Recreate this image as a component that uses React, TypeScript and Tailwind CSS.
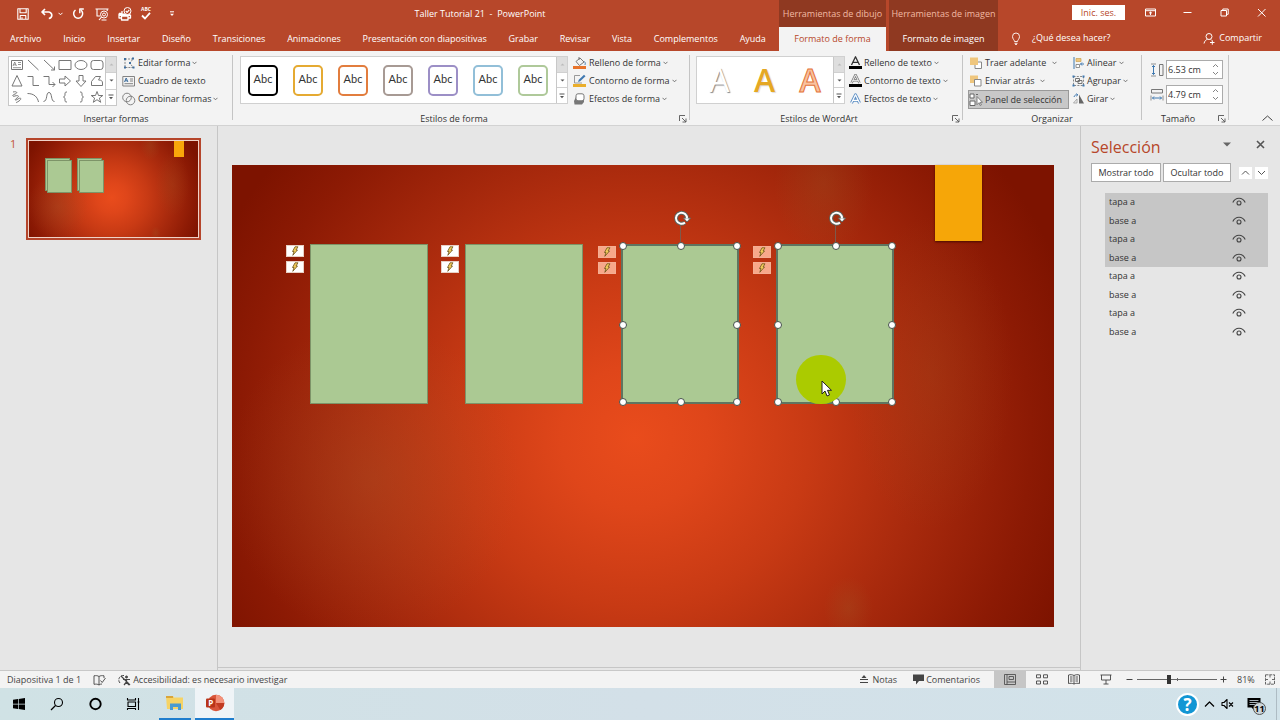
import type { ReactNode } from "react";
import { clsx } from "clsx";

type IconProps = {
  w?: number;
  h?: number;
  className?: string;
  children: ReactNode;
};

function Icon({ w = 14, h = 14, className, children }: IconProps) {
  return (
    <svg
      width={w}
      height={h}
      viewBox={`0 0 ${w} ${h}`}
      fill="none"
      stroke="currentColor"
      strokeLinejoin="round"
      className={clsx("shrink-0", className)}
      aria-hidden="true"
    >
      {children}
    </svg>
  );
}

function Caret({ className }: { className?: string }) {
  return (
    <Icon w={5} h={4} className={clsx("text-[#666]", className)}>
      <path d="M.5 .8 2.5 2.8 4.5 .8" strokeWidth=".9" />
    </Icon>
  );
}

/* ---------- title bar and tabs ---------- */

const tabs = [
  "Archivo",
  "Inicio",
  "Insertar",
  "Diseño",
  "Transiciones",
  "Animaciones",
  "Presentación con diapositivas",
  "Grabar",
  "Revisar",
  "Vista",
  "Complementos",
  "Ayuda",
];

function QuickAccess() {
  return (
    <div className="flex items-center text-white">
      <button aria-label="Guardar" className="ml-4">
        <Icon>
          <path d="M1.8 1.8h10.4v10.4H1.8zM4 1.8v4h6.2v-4M4.2 12.2V8.5h5.6v3.7M6 12v-1.8" strokeWidth="1.1" />
        </Icon>
      </button>
      <button aria-label="Deshacer" className="ml-[10px]">
        <Icon>
          <path d="M5 2 2 5l3 3M2.300 5h6a3 3 0 0 1 .5 6.500" strokeWidth="1.700" />
        </Icon>
      </button>
      <button aria-label="Más opciones de deshacer" className="ml-1">
        <Icon w={5} h={4}>
          <path d="M.5 .8 2.5 2.8 4.5 .8" />
        </Icon>
      </button>
      <button aria-label="Repetir" className="ml-2">
        <Icon>
          <path d="M9.800 3A4.500 4.500 0 1 1 4.500 3" strokeWidth="1.500" />
          <path d="M8.800 6.300V2h4" strokeWidth="1.400" />
        </Icon>
      </button>
      <button aria-label="Presentación desde el principio" className="ml-[10px]">
        <Icon>
          <path d="M.5 2h13M2 2v7h3M4 13l2.500-3M12.200 2v2M6.500 13h5" strokeWidth="1.100" />
          <circle cx="9" cy="7.500" r="3.500" />
          <circle cx="9" cy="7.500" r="1.500" />
        </Icon>
      </button>
      <button aria-label="Vista previa e impresión" className="ml-[9px]">
        <Icon>
          <path d="M1 6.500h3V4M1 6.500V11h2M3.500 9H10v4H3.500zM10 11h2.500V8" strokeWidth="1.300" />
          <path d="M1 6.500h11.500V9H1z" fill="currentColor" stroke="none" />
          <circle cx="9.500" cy="4" r="3.500" fill="#b7472a" />
          <path d="m7.800 4 1.300 1.300L11.300 2.800" strokeWidth="1.200" />
        </Icon>
      </button>
      <button aria-label="Ortografía" className="ml-[9px] flex flex-col items-center">
        <span className="text-[5px] leading-[5px] font-bold">ABC</span>
        <Icon w={10} h={8}>
          <path d="m1 3.500 3 3L9 .8" strokeWidth="1.800" />
        </Icon>
      </button>
      <button aria-label="Personalizar barra" className="ml-[18px]">
        <Icon w={6} h={6}>
          <path d="M1 .8h4" />
          <path d="M1 2.800h4L3 5z" fill="currentColor" stroke="none" />
        </Icon>
      </button>
    </div>
  );
}

function TitleBar() {
  return (
    <header className="flex h-[51px] bg-[#b7472a] text-white">
      <div className="flex w-[779px] grow flex-col">
        <div className="grid h-[27px] grid-cols-[1fr_auto_1fr] items-center">
          <QuickAccess />
          <h1 className="pl-[181px] whitespace-pre">Taller Tutorial 21  -  PowerPoint</h1>
          <span />
        </div>
        <nav className="flex h-6 items-center justify-between pr-[13px] pl-[10px]">
          {tabs.map((tab) => (
            <button key={tab} className="whitespace-nowrap">
              {tab}
            </button>
          ))}
        </nav>
      </div>

      <div className="flex w-[107px] flex-col bg-[#8f3921]">
        <div className="flex h-[27px] items-center justify-center whitespace-nowrap text-[#f2b9a4]">
          Herramientas de dibujo
        </div>
        <button className="flex h-6 items-center justify-center bg-[#f3f3f3] text-[#b7472a]">
          Formato de forma
        </button>
      </div>
      <div className="ml-[3px] flex w-[109px] flex-col bg-[#8f3921]">
        <div className="flex h-[27px] items-center justify-center whitespace-nowrap text-[#f2b9a4]">
          Herramientas de imagen
        </div>
        <button className="h-6 whitespace-nowrap">Formato de imagen</button>
      </div>

      <div className="flex w-[282px] grow flex-col">
        <div className="flex h-[25px] items-center justify-end pr-[13px]">
          <button className="mr-5 h-[15px] w-[53px] bg-white leading-[14px] text-[#b7472a]">
            Inic. ses.
          </button>
          <div className="flex gap-[26px]">
            <button aria-label="Opciones de presentación de la cinta">
              <Icon w={11} h={11}>
                <path d="M.5 2h10v7H.5zM.5 3.700h10M5.500 8V5M4 6.300 5.500 5 7 6.300" />
              </Icon>
            </button>
            <button aria-label="Minimizar">
              <Icon w={11} h={11}>
                <path d="M1.500 5.500h8" />
              </Icon>
            </button>
            <button aria-label="Restaurar">
              <Icon w={11} h={11}>
                <path d="M2 3.500h5.500V9H2zM3.800 3.500V2h5.400v5.300H7.500" />
              </Icon>
            </button>
            <button aria-label="Cerrar">
              <Icon w={11} h={11}>
                <path d="m2 2 7.500 7.500M9.500 2 2 9.500" />
              </Icon>
            </button>
          </div>
        </div>
        <div className="flex h-[26px] items-center justify-between pr-[18px] pl-3">
          <button className="flex items-center gap-[10px]">
            <Icon w={12} h={13}>
              <path d="M4.500 9.500C4.500 8 2.500 7 2.500 4.500a3.500 3.500 0 0 1 7 0C9.500 7 7.500 8 7.500 9.500zM4.500 11.300h3M5 12.600h2" strokeWidth=".9" />
            </Icon>
            ¿Qué desea hacer?
          </button>
          <button className="flex items-center gap-1">
            <Icon w={12} h={13}>
              <circle cx="6" cy="4.500" r="3" />
              <path d="M1 11.500C1.500 9 3 7.700 4.500 7.300M7.500 7.300l1 .7M7 10.500h4.500M9.300 8.300v4.400" />
            </Icon>
            Compartir
          </button>
        </div>
      </div>
    </header>
  );
}

/* ---------- ribbon ---------- */

function Group({ width, label, launcher, children }: {
  width: string;
  label: string;
  launcher?: boolean;
  children: ReactNode;
}) {
  return (
    <section className={clsx("flex shrink-0 flex-col pt-[3px]", width)}>
      <div className="flex h-[55px]">{children}</div>
      <div className="mt-1 flex items-center">
        <h2 className="flex-1 text-center">{label}</h2>
        {launcher && (
          <button aria-label={`Más opciones de ${label}`} className="w-[14px]">
            <Icon w={8} h={8} className="ml-1 text-[#555]">
              <path d="M.5 6V.5H6M3 3l4 4M7 3.500V7H3.500" strokeWidth=".9" />
            </Icon>
          </button>
        )}
      </div>
    </section>
  );
}

function Divider() {
  return <div className="mt-1 mb-[5px] w-px shrink-0 bg-[#c4c4c4]" />;
}

function GalleryScroll() {
  return (
    <div className="flex w-[11px] flex-col border-l border-[#c8c8c8] text-[#555]">
      <button aria-label="Fila anterior" className="flex flex-1 items-center justify-center bg-[#dedede]">
        <Icon w={5} h={3}>
          <path d="M.5 2.500h4L2.500 .5z" fill="#bbb" stroke="none" />
        </Icon>
      </button>
      <button aria-label="Fila siguiente" className="flex flex-1 items-center justify-center border-y border-[#d0d0d0]">
        <Icon w={5} h={3}>
          <path d="M.5 .5h4l-2 2z" fill="currentColor" stroke="none" />
        </Icon>
      </button>
      <button aria-label="Ver todo" className="flex flex-1 items-center justify-center">
        <Icon w={6} h={6}>
          <path d="M.5 1h5" />
          <path d="M1 3h4L3 5.200z" fill="currentColor" stroke="none" />
        </Icon>
      </button>
    </div>
  );
}

function Command({ icon, label, caret = true, wide }: {
  icon: ReactNode;
  label: string;
  caret?: boolean;
  wide?: boolean;
}) {
  return (
    <button className="flex h-[18px] items-center gap-[2px] whitespace-nowrap">
      {icon}
      {label}
      {caret && <Caret className={wide ? "ml-1" : ""} />}
    </button>
  );
}

const shapes: { name: string; art: ReactNode }[] = [
  { name: "Cuadro de texto", art: <><path d="M2.500 3.500h11v9h-11z" /><path d="m4 9 1.700-4L7.400 9M4.600 7.800h2.200M9 5.500h3M9 7.500h3M4 10.700h8" strokeWidth=".8" /></> },
  { name: "Línea", art: <path d="M3 3l10.500 10" /> },
  { name: "Flecha", art: <path d="M3 3l10.500 10M13.500 9.500V13H10" /> },
  { name: "Rectángulo", art: <path d="M2 3.500h12v9H2z" /> },
  { name: "Elipse", art: <ellipse cx="8" cy="8" rx="6" ry="4.500" /> },
  { name: "Rectángulo redondeado", art: <rect x="2" y="3.500" width="12" height="9" rx="2.500" /> },
  { name: "Triángulo", art: <path d="M8 2.500 13 13H3z" /> },
  { name: "Conector", art: <path d="M2.500 3.500H8v9h6" /> },
  { name: "Conector de flecha", art: <path d="M2.500 3.500H8v8h6M11.500 9l2.500 2.500-2.500 2.500" /> },
  { name: "Flecha derecha", art: <path d="M2.500 6h5.500V3l5.500 5L8 13v-3H2.500z" /> },
  { name: "Flecha abajo", art: <path d="M6 2.500h4V8h3l-5 5.500L3 8h3z" /> },
  { name: "Forma libre", art: <path d="M2.500 12.500v-4l4-5h5L9.500 7c3 0 4 1 4 3v2.500z" /> },
  { name: "Garabato", art: <path d="M4 3c4-1 5 1 2 2s-3 3 0 2 5 0 2 2-2 3 1 1 4 0 1 2-3 1-2 2" /> },
  { name: "Arco", art: <path d="M2.500 4.500C9 4.500 12.500 8 13.500 13" /> },
  { name: "Curva", art: <path d="M2.500 12.500C7 12 4.500 3.500 8 3.500s1.500 9 5.500 9" /> },
  { name: "Llave de apertura", art: <path d="M10 3c-2 0-2 .5-2 2s0 2.500-1.500 3C8 8.500 8 9.500 8 11s0 2 2 2" /> },
  { name: "Llave de cierre", art: <path d="M7 3c2 0 2 .5 2 2s0 2.500 1.500 3C9 8.500 9 9.500 9 11s0 2-2 2" /> },
  { name: "Estrella", art: <path d="m8 2.500 1.500 4h4.300l-3.400 2.600 1.300 4.200L8 10.700l-3.700 2.600 1.300-4.200L2.200 6.500h4.300z" /> },
];

const shapeStyles = [
  "border-black",
  "border-[#e5aa32]",
  "border-[#e27d3e]",
  "border-[#a79a94]",
  "border-[#9c8fc6]",
  "border-[#92bfd8]",
  "border-[#afc99a]",
];

const letterA = "M2.500 9 6.500 .8 10.500 9M4 6.300h5";

function Ribbon() {
  return (
    <div className="flex h-[75px] border-b border-[#d2d2d2] bg-[#f3f3f3] text-[#333]">
      <Group width="w-[232px]" label="Insertar formas">
        <div className="mt-[2px] ml-2 flex h-[50px] w-[109px] border border-[#c8c8c8] bg-white">
          <div className="grid flex-1 grid-cols-6 text-[#777]">
            {shapes.map((s) => (
              <button key={s.name} aria-label={s.name}>
                <Icon w={16} h={16}>{s.art}</Icon>
              </button>
            ))}
          </div>
          <GalleryScroll />
        </div>
        <div className="ml-[5px]">
          <Command
            label="Editar forma"
            icon={
              <Icon>
                <path d="M3 3h8L8 7l3 4.500H3z" stroke="#888" strokeDasharray="2 1" />
                <path d="M2 2h2v2H2zM10 1.500h2v2h-2zM2 10.500h2v2H2zM10.500 10.500h2v2h-2zM7 6h2v2H7z" fill="#3f6f9f" stroke="none" />
              </Icon>
            }
          />
          <Command
            label="Cuadro de texto"
            caret={false}
            icon={
              <Icon className="text-[#777]">
                <path d="M.8 2.500h11.700v9.500H.8zM8 5h3M8 7h3M2.500 9.700h8.500" strokeWidth=".9" />
                <path d="m2.500 8 1.700-4 1.700 4M3 6.800h2.300" stroke="#3f6f9f" />
              </Icon>
            }
          />
          <Command
            label="Combinar formas"
            icon={
              <Icon className="text-[#777]">
                <circle cx="5" cy="5.500" r="4.300" strokeWidth=".9" />
                <circle cx="8.500" cy="8.500" r="4.300" strokeWidth=".9" />
              </Icon>
            }
          />
        </div>
      </Group>
      <Divider />

      <Group width="w-[456px]" label="Estilos de forma" launcher>
        <div className="mt-[2px] ml-[7px] flex h-12 w-[328px] border border-[#d0d0d0] bg-white">
          <div className="flex flex-1 items-center gap-[15px] pl-[7px]">
            {shapeStyles.map((style) => (
              <button
                key={style}
                className={clsx(
                  "flex h-[31px] w-[30px] items-center justify-center rounded-[5px] border-2 bg-white pb-[3px] font-['Lato',sans-serif] text-[11px] text-[#333]",
                  style,
                )}
              >
                Abc
              </button>
            ))}
          </div>
          <GalleryScroll />
        </div>
        <div className="ml-[5px]">
          <Command
            label="Relleno de forma"
            icon={
              <Icon>
                <path d="M0 10h13v3H0z" fill="#e8742c" stroke="none" />
                <path d="m3 5.500 4-3.500 4 4-4.500 3.500zM6 4V1" stroke="#777" />
                <path d="M11.500 5.500c1 1.500 1 2.500.3 3.500" stroke="#3f78b0" />
              </Icon>
            }
          />
          <Command
            label="Contorno de forma"
            icon={
              <Icon>
                <path d="M0 10h13v3H0z" fill="#eaae2b" stroke="none" />
                <path d="M7 1.500H1.500V9H9" stroke="#999" />
                <path d="m5 8 .8-2.200L11 .8l1.500 1.500-5.300 5z" fill="#3f78b0" stroke="none" />
              </Icon>
            }
          />
          <Command
            label="Efectos de forma"
            icon={
              <Icon>
                <path d="M3 5h8v5l-2 2.500H1.500L1 9z" fill="#777" stroke="none" />
                <rect x="3" y="1.800" width="8" height="7" rx="2" fill="#fff" stroke="#777" />
              </Icon>
            }
          />
        </div>
      </Group>
      <Divider />

      <Group width="w-[272px]" label="Estilos de WordArt" launcher>
        <div className="mt-[2px] ml-[6px] flex h-12 w-[149px] border border-[#d0d0d0] bg-white">
          <div className="flex flex-1 items-center justify-around text-[32px] leading-none">
            <button className="text-white [text-shadow:1px_1px_1px_#888]">A</button>
            <button className="font-semibold text-[#e5a823] [text-shadow:1px_1px_1px_#ddd]">A</button>
            <button className="font-semibold text-[#f8c29f] [-webkit-text-stroke:1px_#e5743a]">A</button>
          </div>
          <GalleryScroll />
        </div>
        <div className="ml-1">
          <Command
            label="Relleno de texto"
            icon={
              <Icon w={13}>
                <path d={letterA} strokeWidth="1.300" />
                <path d="M0 10h13v3H0z" fill="#000" stroke="none" />
              </Icon>
            }
          />
          <Command
            label="Contorno de texto"
            icon={
              <Icon w={13}>
                <path d={letterA} stroke="#777" strokeWidth="2.400" />
                <path d={letterA} stroke="#fff" strokeWidth=".9" />
                <path d="M0 10h13v3H0z" fill="#000" stroke="none" />
              </Icon>
            }
          />
          <Command
            label="Efectos de texto"
            icon={
              <Icon w={13}>
                <g transform="translate(0 2)">
                  <path d={letterA} stroke="#5b8ec4" strokeWidth="3" />
                  <path d={letterA} stroke="#fff" strokeWidth="1.200" />
                </g>
              </Icon>
            }
          />
        </div>
      </Group>
      <Divider />

      <Group width="w-[178px]" label="Organizar">
        <div className="ml-[5px] w-[101px]">
          <div className="pl-px">
            <Command
              label="Traer adelante"
              wide
              icon={
                <Icon>
                  <path d="M6 6h6.500v6.500H6z" fill="#fff" stroke="#888" />
                  <path d="M1 1.500h8V9H1z" fill="#efc67d" stroke="none" />
                </Icon>
              }
            />
            <Command
              label="Enviar atrás"
              wide
              icon={
                <Icon>
                  <path d="M1 1.500h8V9H1z" fill="#efc67d" stroke="none" />
                  <path d="M5.500 5.500h6.500V12H5.500z" fill="#fff" stroke="#888" />
                </Icon>
              }
            />
          </div>
          <button aria-pressed="true" className="flex h-[19px] w-full items-center gap-[2px] border border-[#999] bg-[#c8c8c8] whitespace-nowrap">
            <Icon className="text-[#666]">
              <path d="M1 1h4v4H1zM1 8h5v4.500H1zM7 1.500h2" fill="#fff" />
              <path d="M8 3.500v8.200l2-2 1.200 2.800 1.200-.6-1.200-2.600h2.300z" fill="#fff" strokeWidth=".8" />
            </Icon>
            Panel de selección
          </button>
        </div>
        <div className="ml-[3px]">
          <Command
            label="Alinear"
            icon={
              <Icon w={13}>
                <path d="M2 1v12" stroke="#3f78b0" />
                <path d="M4 2.500h5v3H4z" fill="#efc67d" stroke="#caa050" strokeWidth=".7" />
                <path d="M4 8.500h3.500v3H4z" fill="#fff" stroke="#777" strokeWidth=".8" />
                <path d="M12 8H8.500M10 6.500 8.500 8 10 9.500" stroke="#3f78b0" />
              </Icon>
            }
          />
          <Command
            label="Agrupar"
            icon={
              <Icon w={13}>
                <path d="M1.500 2.500h10v9h-10z" stroke="#888" strokeDasharray="2 1.300" />
                <path d="M3.500 4.500h4v3h-4zM6 6.500h4v3H6z" stroke="#666" strokeWidth=".9" />
                <path d="M.5 1.500h2v2h-2zM10.500 1.500h2v2h-2zM.5 10.500h2v2h-2zM10.500 10.500h2v2h-2z" fill="#3f78b0" stroke="none" />
              </Icon>
            }
          />
          <Command
            label="Girar"
            icon={
              <Icon w={13}>
                <path d="M7 11.500V2.500l5 9z" fill="#666" stroke="none" />
                <path d="M5 11V7l-3.500 4z" stroke="#999" strokeWidth=".8" />
                <path d="M2 5c.5-2 2-2.500 3.500-2M4.500 1.500l1.300 1.400-1.500 1.300" stroke="#3f78b0" />
              </Icon>
            }
          />
        </div>
      </Group>
      <Divider />

      <Group width="w-[86px]" label="Tamaño" launcher>
        <div className="ml-[8px] flex flex-col gap-[6px] pt-[6px]">
          <SizeField label="Alto de forma" value="6.53 cm">
            <path d="M9.500 1.500h3.500v11H9.500z" stroke="#777" />
            <path d="M1 1h5M1 13h5" stroke="#777" strokeWidth=".8" />
            <path d="M3.500 2.500v9M2 4l1.500-1.500L5 4M2 10l1.500 1.500L5 10" stroke="#3f78b0" />
          </SizeField>
          <SizeField label="Ancho de forma" value="4.79 cm">
            <path d="M1.500 1.500h11V5h-11z" stroke="#777" />
            <path d="M1 7.500v5M13 7.500v5" stroke="#777" strokeWidth=".8" />
            <path d="M2.500 10h9M4 8.500 2.500 10 4 11.500M10 8.500l1.500 1.500-1.500 1.500" stroke="#3f78b0" />
          </SizeField>
        </div>
      </Group>
      <Divider />

      <button aria-label="Contraer la cinta de opciones" className="mt-auto mr-[6px] mb-[2px] ml-auto">
        <Icon w={13} h={10} className="text-[#444]">
          <path d="m1.500 7.500 5-4.500 5 4.500" />
        </Icon>
      </button>
    </div>
  );
}

function SizeField({ label, value, children }: { label: string; value: string; children: ReactNode }) {
  return (
    <label className="flex items-center gap-[2px]">
      <Icon>{children}</Icon>
      <span className="flex h-[19px] w-[57px] items-center border border-[#ababab] bg-white pr-[3px]">
        <input aria-label={label} defaultValue={value} className="w-full min-w-0 flex-1 pl-px outline-none" />
        <Icon w={7} h={13} className="text-[#777]">
          <path d="m1 4 2.500-2.500L6 4M1 9l2.500 2.500L6 9" strokeWidth=".9" />
        </Icon>
      </span>
    </label>
  );
}

/* ---------- slide ---------- */

const slideBackdrop =
  "bg-[radial-gradient(ellipse_18%_34%_at_17%_68%,#a8582a55,transparent),radial-gradient(ellipse_6%_16%_at_72%_4%,#a0602a40,transparent),radial-gradient(ellipse_3%_7%_at_75%_96%,#a0602a40,transparent),radial-gradient(ellipse_10%_34%_at_85%_45%,#a0501f40,transparent),radial-gradient(ellipse_56%_96%_at_49%_59%,#e94c1c_0%,#df461a_16%,#c83a14_38%,#a92a0d_62%,#8c1a04_86%,#7d1300_100%)]";

function Bolt({ faded }: { faded?: boolean }) {
  return (
    <div
      className={clsx(
        "flex h-3 w-[18px] items-center justify-center border",
        faded ? "border-[#f5ae93] bg-[#f7a88a]" : "border-[#e8d0c4] bg-white",
      )}
    >
      <Icon w={8} h={10}>
        <path d="M4 .8h3L5 4h1.500L1.800 9.300 3 5.500H1.500z" fill="#f2cc5a" stroke="#6a531a" strokeWidth=".8" />
      </Icon>
    </div>
  );
}

const handleSpots = [
  "-left-1 -top-1",
  "left-[54px] -top-1",
  "-right-1 -top-1",
  "-left-1 top-[75px]",
  "-right-1 top-[75px]",
  "-left-1 -bottom-1",
  "left-[54px] -bottom-1",
  "-right-1 -bottom-1",
];

function Card({ place, selected }: { place: string; selected?: boolean }) {
  return (
    <div
      className={clsx(
        "absolute top-[79px] h-[160px] w-[118px] bg-[#abc993]",
        selected ? "border-2 border-[#5f7560]" : "border border-[#7d9468]",
        place,
      )}
    >
      <div className="absolute top-0 -left-[25px] flex flex-col gap-1">
        <Bolt faded={selected} />
        <Bolt faded={selected} />
      </div>
      {selected && (
        <>
          <div className="absolute -top-5 left-[57px] h-4 w-px bg-[#7d5a4c]" />
          <Icon w={18} h={18} className="absolute -top-[36px] left-[50px]">
            <path d="M12 12.500A5.500 5.500 0 1 1 14 8.500" stroke="#5f6660" strokeWidth="4" />
            <path d="M10.500 8h7L14 12z" fill="#fff" stroke="#5f6660" />
            <path d="M12 12.500A5.500 5.500 0 1 1 14 8.500" stroke="#fff" strokeWidth="2" />
          </Icon>
          {handleSpots.map((spot) => (
            <span
              key={spot}
              className={clsx("absolute size-[8px] rounded-full border border-[#45504a] bg-white", spot)}
            />
          ))}
        </>
      )}
    </div>
  );
}

function Slide() {
  return (
    <div className={clsx("relative aspect-[822/462] w-full bg-[#7d1300]", slideBackdrop)}>
      <div className="absolute top-0 left-[703px] h-[76px] w-[47px] bg-[#f6a608] shadow-[0_1px_2px_#4a0c00]" />
      <Card place="left-[78px]" />
      <Card place="left-[233px]" />
      <Card place="left-[389px]" selected />
      <Card place="left-[544px]" selected />
      <div className="absolute top-[190px] left-[564px] h-[49px] w-[50px] rounded-full bg-[#abcb00]" />
      <Icon w={12} h={18} className="absolute top-[215px] left-[589px]">
        <path d="M1 1v13l3-3 2 5 2.500-1-2-4.700h4z" fill="#fff" stroke="#222" />
      </Icon>
    </div>
  );
}

function Thumbnails() {
  return (
    <aside className="flex w-[218px] shrink-0 items-start border-r border-[#c6c6c6] pt-3">
      <span className="w-[26px] pl-[10px] text-[11px] text-[#c2553b]">1</span>
      <button
        aria-label="Diapositiva 1"
        className="h-[102px] w-[175px] border-2 border-[#b5452b] bg-[#f0d3c8] p-px"
      >
        <div className={clsx("relative h-full w-full bg-[#7d1300]", slideBackdrop)}>
          <div className="absolute top-0 left-[145px] h-4 w-[10px] bg-[#f9a60a]" />
          {["left-[16px]", "left-[48px]"].map((left) => (
            <div key={left} className={clsx("absolute top-[17px]", left)}>
              <div className="h-[33px] w-[25px] border border-[#7d9468] bg-[#abc993]" />
              <div className="absolute top-[2px] left-[2px] h-[33px] w-[25px] border border-[#7d9468] bg-[#abc993]" />
            </div>
          ))}
        </div>
      </button>
    </aside>
  );
}

/* ---------- selection pane ---------- */

const items = ["tapa a", "base a", "tapa a", "base a", "tapa a", "base a", "tapa a", "base a"];

function SelectionPane() {
  return (
    <aside className="w-[200px] shrink-0 border-l border-[#c6c6c6] pl-[10px] text-[#333]">
      <div className="flex items-center pt-[10px] pr-[15px]">
        <h2 className="flex-1 text-[16px] leading-[22px] text-[#b7472a]">Selección</h2>
        <button aria-label="Opciones del panel" className="mr-[25px] mb-[5px]">
          <Icon w={8} h={5}>
            <path d="M0 .5h8l-4 4z" fill="#666" stroke="none" />
          </Icon>
        </button>
        <button aria-label="Cerrar panel" className="mb-[5px]">
          <Icon w={9} h={9} className="text-[#555]">
            <path d="m1 1 7 7M8 1 1 8" strokeWidth="1.600" />
          </Icon>
        </button>
      </div>
      <div className="mt-[5px] flex items-center">
        <button className="h-[19px] w-[70px] border border-[#ababab] bg-white">Mostrar todo</button>
        <button className="ml-[2px] h-[19px] w-[68px] border border-[#ababab] bg-white">Ocultar todo</button>
        <button aria-label="Traer adelante" className="ml-2 bg-white">
          <Icon w={13} h={12} className="text-[#555]">
            <path d="m3 7.500 3.500-3.500L10 7.500" />
          </Icon>
        </button>
        <button aria-label="Enviar atrás" className="ml-[3px] bg-white">
          <Icon w={13} h={12} className="text-[#555]">
            <path d="M3 4l3.500 3.500L10 4" />
          </Icon>
        </button>
      </div>
      <ul className="mt-[11px] mr-3 ml-[14px] grid h-[148px] auto-rows-fr">
        {items.map((name, i) => (
          <li key={i} className={clsx("flex items-center pr-[22px] pl-1", i < 4 && "bg-[#c6c6c6]")}>
            <span className="flex-1">{name}</span>
            <button aria-label={`Ocultar ${name}`}>
              <Icon w={14} h={12} className="text-[#444]">
                <path d="M.8 6.500C3.500 .8 10.500 .8 13.200 6.500" strokeWidth="1.100" />
                <circle cx="7" cy="7" r="2" strokeWidth="1.100" />
              </Icon>
            </button>
          </li>
        ))}
      </ul>
    </aside>
  );
}

/* ---------- status bar and taskbar ---------- */

function StatusBar() {
  return (
    <footer className="flex h-[18px] items-center border-t border-[#c8c8c8] bg-[#f3f3f3] pl-[7px] text-[#444]">
      <span>Diapositiva 1 de 1</span>
      <button aria-label="Revisión ortográfica" className="ml-3">
        <Icon w={13} h={12}>
          <path d="M6 11V2.500C4.500 1.500 3 1.500 1 1.800v8.500c2-.3 3.500-.3 5 .7 1-.8 2-1 3-1M6 2.500C7.500 1.500 9 1.500 11 1.800V4M7.500 6.500l1.700 2L12.500 4" strokeWidth=".9" />
        </Icon>
      </button>
      <button className="ml-3 flex items-center gap-[2px]">
        <Icon w={13} h={12}>
          <path d="M6 1.500A4.500 4.500 0 0 0 2 9" strokeDasharray="3 1" />
          <circle cx="8.500" cy="3" r="1" fill="currentColor" />
          <path d="M5 5.500h7M8.500 5v3L6 11M8.500 8l2.500 3M3 2l9 9" strokeWidth="1.200" />
        </Icon>
        Accesibilidad: es necesario investigar
      </button>
      <div className="ml-auto flex h-full items-center">
        <button className="flex items-center gap-[3px]">
          <Icon w={10} h={11}>
            <path d="M1 5.500h8M1 8.500h8" />
            <path d="M5 1 7.500 4h-5z" fill="currentColor" stroke="none" />
          </Icon>
          Notas
        </button>
        <button className="ml-4 flex items-center gap-[2px]">
          <Icon w={11} h={11}>
            <path d="M0 .5h11V7H6l-3 3.500V7H0z" fill="currentColor" stroke="none" />
          </Icon>
          Comentarios
        </button>
        <button aria-label="Normal" className="ml-[14px] flex h-full w-8 items-center justify-center bg-[#c6c6c6]">
          <Icon w={12} h={11}>
            <path d="M.5 .5h11v10H.5zM3 .5v10M3 8h8.500M5 2.500h4.500v3H5z" strokeWidth=".8" />
          </Icon>
        </button>
        <button aria-label="Clasificador de diapositivas" className="ml-[10px]">
          <Icon w={12} h={11}>
            <path d="M.5 .8h4v3h-4zM7.500 .8h4v3h-4zM.5 7h4v3h-4zM7.500 7h4v3h-4z" strokeWidth=".9" />
          </Icon>
        </button>
        <button aria-label="Vista de lectura" className="ml-5">
          <Icon w={12} h={11}>
            <path d="M6 10V1.500C4 .5 2.500 .5 .5 1v8.500c2-.4 3.500-.3 5.500.5 2-.8 3.500-.9 5.500-.5V1C9.500 .5 8 .5 6 1.500M2 3h2.500M2 5h2.500M2 7h2.500M7.500 3H10M7.500 5H10M7.500 7H10" strokeWidth=".9" />
          </Icon>
        </button>
        <button aria-label="Presentación" className="ml-5">
          <Icon w={12} h={11}>
            <path d="M.5 1h11M1.500 1v5h9V1M6 6v4M3.500 10h5" strokeWidth=".9" />
          </Icon>
        </button>
        <button aria-label="Alejar" className="ml-[14px]">
          <Icon w={7} h={7}>
            <path d="M.5 3.500h6" />
          </Icon>
        </button>
        <div className="relative ml-1 flex h-full items-center">
          <input
            type="range"
            aria-label="Zoom"
            min={0}
            max={100}
            defaultValue={39}
            className="h-[9px] w-20 appearance-none bg-transparent [&::-webkit-slider-runnable-track]:h-px [&::-webkit-slider-runnable-track]:bg-[#666] [&::-webkit-slider-thumb]:-mt-1 [&::-webkit-slider-thumb]:h-[9px] [&::-webkit-slider-thumb]:w-1 [&::-webkit-slider-thumb]:appearance-none [&::-webkit-slider-thumb]:bg-[#333]"
          />
          <span className="absolute left-10 h-[3px] w-px bg-[#666]" />
        </div>
        <button aria-label="Acercar" className="ml-[3px]">
          <Icon w={7} h={7}>
            <path d="M.5 3.500h6M3.500 .5v6" />
          </Icon>
        </button>
        <span className="ml-[10px] w-[28px]">81%</span>
        <button aria-label="Ajustar a la ventana" className="mr-[5px]">
          <Icon w={10} h={11}>
            <path d="M.5 .8h9v9.400h-9zM5 1v2.500M5 10V7.500M1 5.500h2M9 5.500H7" strokeWidth=".8" strokeDasharray="3 .8" />
          </Icon>
        </button>
      </div>
    </footer>
  );
}

function TaskButton({ label, width = "w-[38px]", className, children }: {
  label: string;
  width?: string;
  className?: string;
  children: ReactNode;
}) {
  return (
    <button
      aria-label={label}
      className={clsx("flex h-full items-center justify-center", width, className)}
    >
      {children}
    </button>
  );
}

function Taskbar() {
  return (
    <div className="flex h-8 items-center bg-linear-to-r from-[#d0e2e5] via-[#d3e0e8] to-[#d2e3ea] text-black">
      <TaskButton label="Inicio">
        <Icon>
          <path d="m1 2.800 5-.8v4.700H1zM6.700 1.900 13 1v5.700H6.700zM1 7.400h5V12l-5-.7zM6.700 7.400H13V13l-6.300-.9z" fill="currentColor" stroke="none" />
        </Icon>
      </TaskButton>
      <TaskButton label="Buscar">
        <Icon>
          <circle cx="8.500" cy="5.500" r="4" strokeWidth="1.100" />
          <path d="M5.500 8.500 1 13" strokeWidth="1.200" />
        </Icon>
      </TaskButton>
      <TaskButton label="Cortana">
        <Icon>
          <circle cx="7.500" cy="7" r="5.200" strokeWidth="1.900" />
        </Icon>
      </TaskButton>
      <TaskButton label="Vista de tareas" className="mr-[7px]">
        <Icon>
          <path d="M1.500 1v2h8V1M2 5h7.500v4.500H2zM1.500 13v-1.500h8V13M12.500 1v12M11.500 5h2" strokeWidth="1.100" />
        </Icon>
      </TaskButton>
      <TaskButton label="Explorador de archivos" width="w-8" className="mr-1 border-b-2 border-[#1f7dcd]">
        <Icon w={18} h={16}>
          <path d="M0 1h7l1 1.500h9V14H1z" fill="#f6d365" stroke="none" />
          <path d="M0 1h7v2H0z" fill="#d9a53a" stroke="none" />
          <path d="M4 15V8.500h11V15h-3v-3H7v3z" fill="#4a9ad0" stroke="none" />
        </Icon>
      </TaskButton>
      <TaskButton label="PowerPoint" width="w-[39px]" className="border-b-2 border-[#1f7dcd] bg-[#eff4f7]">
        <Icon w={20} h={18}>
          <circle cx="11" cy="9" r="8.300" fill="#d9553a" stroke="none" />
          <path d="M11 .7A8.300 8.300 0 0 1 19.300 9H11z" fill="#f3927b" stroke="none" />
          <path d="M11 9h8.300a8.300 8.300 0 0 1-4 7z" fill="#c13b22" stroke="none" />
          <rect x="1" y="4.500" width="9" height="9" rx="1" fill="#b93419" stroke="none" />
          <text x="3.200" y="12" fill="#fff" stroke="none" fontSize="8" fontWeight="700">P</text>
        </Icon>
      </TaskButton>

      <div className="ml-auto flex h-full items-center pr-[3px]">
        <button aria-label="Ayuda" className="flex size-[23px] items-center justify-center rounded-full border-2 border-white bg-[#1296d4] text-[17px] leading-none font-bold text-white">
          ?
        </button>
        <button aria-label="Mostrar iconos ocultos" className="ml-[5px]">
          <Icon w={11} h={8}>
            <path d="M1 6.500 5.500 2 10 6.500" strokeWidth="1.200" />
          </Icon>
        </button>
        <button aria-label="Volumen" className="ml-[6px]">
          <Icon w={13} h={12}>
            <path d="M1 4.500h2l3-3v9l-3-3H1zM8 4.500l4 4M12 4.500l-4 4" strokeWidth="1.100" />
          </Icon>
        </button>
        <button aria-label="Notificaciones: 11" className="relative mr-[15px] ml-[13px]">
          <Icon w={14} h={14}>
            <path d="M.5 1h13v9.500H8V14l-3.500-3.500h-4z" fill="currentColor" stroke="none" />
            <path d="M2.500 3.500h9M2.500 5.500h9M2.500 7.500h6" stroke="#d3e0e8" strokeWidth=".8" />
          </Icon>
          <span className="absolute top-[5px] left-[6px] flex size-[13px] items-center justify-center rounded-full border border-[#555] bg-[#cbd5da] font-bold">
            11
          </span>
        </button>
        <span className="h-full w-px bg-[#aebcc4]" />
      </div>
    </div>
  );
}

export default function App() {
  return (
    <div className="flex min-h-screen flex-col bg-[#e6e6e6] font-['Open_Sans','Noto_Sans',sans-serif] text-[9px] leading-[12px]">
      <TitleBar />
      <Ribbon />
      <div className="flex flex-1">
        <Thumbnails />
        <main className="mb-[2px] flex-1 border-b border-[#c6c6c6] pt-[39px] pr-[26px] pl-[14px]">
          <Slide />
        </main>
        <SelectionPane />
      </div>
      <StatusBar />
      <Taskbar />
    </div>
  );
}
